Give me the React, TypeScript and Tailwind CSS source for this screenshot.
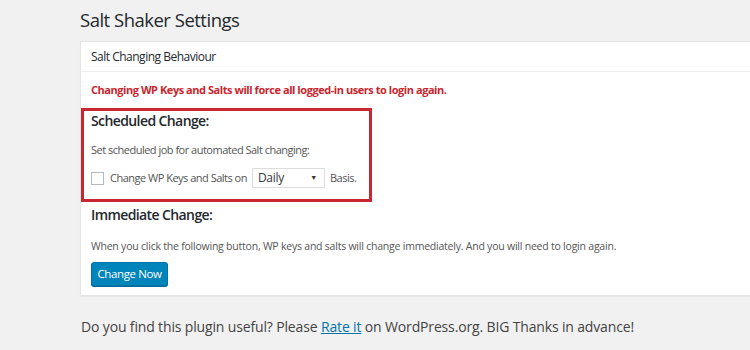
import React from "react";

export default function App() {
  return (
    <div className="w-[750px] h-[350px] overflow-hidden bg-[#f1f1f1] font-['Open_Sans',sans-serif] text-[#444]">
      <div className="pl-[80px]">
        <h1 className="h-[41px] pt-[5px] text-[18.5px] tracking-[-0.5px] leading-[30px] text-[#23282d] font-normal">
          Salt Shaker Settings
        </h1>
        <div className="bg-white border border-r-0 border-[#e5e5e5] shadow-[0_1px_1px_rgba(0,0,0,0.04)]">
          <div className="h-[30px] border-b border-[#eee] px-[10px] flex items-center text-[12px] tracking-[-0.5px] text-[#23282d]">
            Salt Changing Behaviour
          </div>
          <div className="pb-[9px]">
            <div className="h-[36px] flex items-center px-[10px] text-[11px] tracking-[-0.45px] font-bold text-[#c9252d]">
              Changing WP Keys and Salts will force all logged-in users to login again.
            </div>
            <div className="w-[291px] h-[94px] border-[3px] border-[#c62733] px-[7px]">
              <div className="h-[20px] leading-[20px] text-[14px] tracking-[-0.6px] font-semibold text-[#23282d]">
                Scheduled Change:
              </div>
              <div className="mt-[9px] h-[20px] leading-[20px] text-[11px] tracking-[-0.5px] text-[#555]">
                Set scheduled job for automated Salt changing:
              </div>
              <div className="mt-[8px] h-[20px] flex items-center whitespace-nowrap text-[11px] tracking-[-0.5px] text-[#555]">
                <span className="w-[13px] h-[13px] border border-[#b4b9be] bg-white shrink-0"></span>
                <span className="ml-[6px]">Change WP Keys and Salts on</span>
                <span className="ml-[5px] w-[73px] h-[20px] shrink-0 border border-[#ddd] bg-white flex items-center justify-between pl-[5px] pr-[7px] text-[12px] tracking-[-0.3px] text-[#32373c]">
                  <span>Daily</span>
                  <span className="text-[7px] text-[#333]">▼</span>
                </span>
                <span className="ml-[5px]">Basis.</span>
              </div>
            </div>
            <div className="px-[10px]">
              <div className="mt-[3px] h-[20px] leading-[20px] text-[14px] tracking-[-0.6px] font-semibold text-[#23282d]">
                Immediate Change:
              </div>
              <div className="mt-[11px] h-[20px] leading-[20px] text-[10.5px] tracking-[-0.22px] text-[#555] whitespace-nowrap">
                When you click the following button, WP keys and salts will change immediately. And you will need to login again.
              </div>
              <button className="mt-[6px] w-[77px] h-[24px] rounded-[3px] bg-[#0085ba] border border-[#0073aa] text-white text-[11.5px] tracking-[-0.4px] shadow-[0_1px_0_#006799]">
                Change Now
              </button>
            </div>
          </div>
        </div>
        <div className="mt-[21px] pl-[1px] h-[20px] leading-[20px] text-[14px] tracking-[-0.15px] text-[#444] whitespace-nowrap">
          Do you find this plugin useful? Please{" "}
          <a className="text-[#0073aa] underline">Rate it</a> on WordPress.org. BIG Thanks in advance!
        </div>
      </div>
    </div>
  );
}
